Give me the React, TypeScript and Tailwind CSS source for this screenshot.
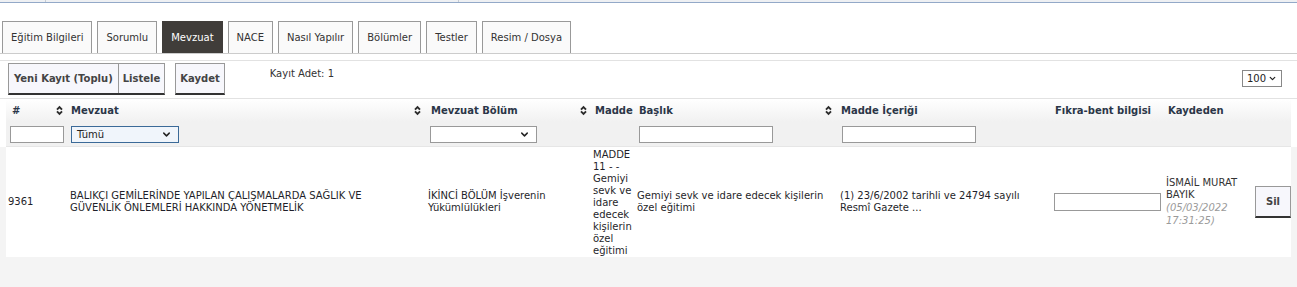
import { ChevronDown } from 'lucide-react'

const tabs = [
  'Eğitim Bilgileri',
  'Sorumlu',
  'Mevzuat',
  'NACE',
  'Nasıl Yapılır',
  'Bölümler',
  'Testler',
  'Resim / Dosya',
]

function SortIcon() {
  return (
    <svg width="7" height="11" viewBox="0 0 7 11" className="shrink-0">
      <path d="M1 4.6 L3.5 2 L6 4.6" fill="none" stroke="#2b2b2b" strokeWidth="1.9" />
      <path d="M1 6.4 L3.5 9 L6 6.4" fill="none" stroke="#2b2b2b" strokeWidth="1.9" />
    </svg>
  )
}

function FakeSelect({
  label,
  className,
  chevron = 11,
}: {
  label?: string
  className: string
  chevron?: number
}) {
  return (
    <div className={`flex h-[17px] items-center justify-between border pl-[5px] pr-[6px] ${className}`}>
      <span className="text-[10px] text-[#222]">{label}</span>
      <ChevronDown size={chevron} strokeWidth={3.2} color="#222" />
    </div>
  )
}

export default function App() {
  return (
    <div className="h-[287px] w-[1297px] overflow-hidden bg-white font-['DejaVu_Sans',sans-serif] text-[10px] text-[#222]">
      {/* top strip */}
      <div className="flex h-[3px] border-b border-[#93a9c8] bg-[#eef0f3]">
        <div className="w-[46px] border-r border-[#c5cbd3]" />
        <div className="w-[413px] border-r border-[#c5cbd3]" />
      </div>

      {/* Tabs */}
      <div className="mt-[18px] flex gap-[5px] border-b border-[#ccc] pl-[2px]">
        {tabs.map((t) => (
          <div
            key={t}
            className={`flex h-[32px] items-center border border-b-0 px-[8px] ${
              t === 'Mevzuat'
                ? 'border-[#403d3a] bg-[#403d3a] text-white'
                : 'border-[#999] bg-[#fafafa] text-[#333]'
            }`}
          >
            {t}
          </div>
        ))}
      </div>

      {/* Toolbar */}
      <div className="mt-[6px] border-t border-[#e2e2e2] pt-[2px]">
        <div className="flex h-[34px] items-start pl-[8px]">
          <div className="flex h-[32px] border border-b-2 border-[#999] border-b-[#333] bg-[#f7f7fc] font-bold text-[#444]">
            <div className="flex items-center px-[5px]">Yeni Kayıt (Toplu)</div>
            <div className="flex items-center border-l border-[#999] px-[4px]">Listele</div>
          </div>
          <div className="ml-[10px] flex h-[32px] items-center border border-b-2 border-[#999] border-b-[#333] bg-[#f7f7fc] px-[4px] font-bold text-[#444]">
            Kaydet
          </div>
          <div className="ml-[45px] mt-[3px] text-[#333]">Kayıt Adet: 1</div>
          <div className="ml-auto mr-[15px] mt-[7px]">
            <FakeSelect label="100" chevron={9} className="w-[40px] border-[#888] bg-white !pl-[4px] !pr-[4px]" />
          </div>
        </div>
      </div>

      {/* Table */}
      <div className="mt-[1px] border-t border-[#e2e2e2] px-[6px]">
        {/* header */}
        <div className="grid h-[23px] grid-cols-[60px_359px_165px_45px_201px_214px_113px_89px_41px] bg-gradient-to-b from-white to-[#f1f1f1] font-bold text-[#2b3648]">
          <div className="flex items-center justify-between pl-[6px] pr-[3px]">
            <span>#</span>
            <SortIcon />
          </div>
          <div className="flex items-center justify-between pl-[5px] pr-[4px]">
            <span>Mevzuat</span>
            <SortIcon />
          </div>
          <div className="flex items-center justify-between pl-[6px] pr-[3px]">
            <span>Mevzuat Bölüm</span>
            <SortIcon />
          </div>
          <div className="flex items-center pl-[5px]">Madde</div>
          <div className="flex items-center justify-between pl-[4px] pr-[4px]">
            <span>Başlık</span>
            <SortIcon />
          </div>
          <div className="flex items-center pl-[5px]">Madde İçeriği</div>
          <div className="flex items-center pl-[5px]">Fıkra-bent bilgisi</div>
          <div className="flex items-center pl-[5px]">Kaydeden</div>
          <div />
        </div>

        {/* filters */}
        <div className="grid h-[25px] grid-cols-[60px_359px_165px_45px_201px_214px_113px_89px_41px] items-center border-b border-[#e6e6e6] bg-[#f1f1f1]">
          <div className="pl-[4px]">
            <div className="h-[17px] w-[54px] border border-[#999] bg-white" />
          </div>
          <div className="pl-[5px]">
            <FakeSelect label="Tümü" className="w-[108px] border-[#3b6a98] bg-[#f0f5fb]" />
          </div>
          <div className="pl-[5px]">
            <FakeSelect className="w-[107px] border-[#999] bg-white" />
          </div>
          <div />
          <div className="pl-[4px]">
            <div className="h-[17px] w-[134px] border border-[#999] bg-white" />
          </div>
          <div className="pl-[6px]">
            <div className="h-[17px] w-[134px] border border-[#999] bg-white" />
          </div>
          <div />
          <div />
          <div />
        </div>
      </div>

      {/* data row */}
      <div className="h-[200px] bg-[#f4f4f4] px-[6px]">
        <div className="grid h-[110px] grid-cols-[60px_359px_165px_45px_201px_214px_113px_89px_41px] items-center bg-white leading-[12px] text-[#1f1f2a]">
          <div className="pl-[2px]">9361</div>
          <div className="pl-[4px]">
            BALIKÇI GEMİLERİNDE YAPILAN ÇALIŞMALARDA SAĞLIK VE
            <br />
            GÜVENLİK ÖNLEMLERİ HAKKINDA YÖNETMELİK
          </div>
          <div className="pl-[3px]">
            İKİNCİ BÖLÜM İşverenin
            <br />
            Yükümlülükleri
          </div>
          <div className="pl-[3px] pt-[2px]">
            MADDE
            <br />
            11 - -
            <br />
            Gemiyi
            <br />
            sevk ve
            <br />
            idare
            <br />
            edecek
            <br />
            kişilerin
            <br />
            özel
            <br />
            eğitimi
          </div>
          <div className="pl-[2px]">
            Gemiyi sevk ve idare edecek kişilerin
            <br />
            özel eğitimi
          </div>
          <div className="pl-[4px]">
            (1) 23/6/2002 tarihli ve 24794 sayılı
            <br />
            Resmî Gazete ...
          </div>
          <div className="pl-[4px]">
            <div className="h-[18px] w-[107px] border border-[#999] bg-white" />
          </div>
          <div className="pl-[3px] leading-[12.6px] text-[#333]">
            İSMAİL MURAT
            <br />
            BAYIK
            <br />
            <span className="italic text-[#9a9a9a]">
              (05/03/2022
              <br />
              17:31:25)
            </span>
          </div>
          <div className="pl-[3px]">
            <div className="flex h-[32px] w-[36px] items-center justify-center border border-b-2 border-[#999] border-b-[#333] bg-[#f7f7fc] font-bold text-[#444]">
              Sil
            </div>
          </div>
        </div>
      </div>
    </div>
  )
}
